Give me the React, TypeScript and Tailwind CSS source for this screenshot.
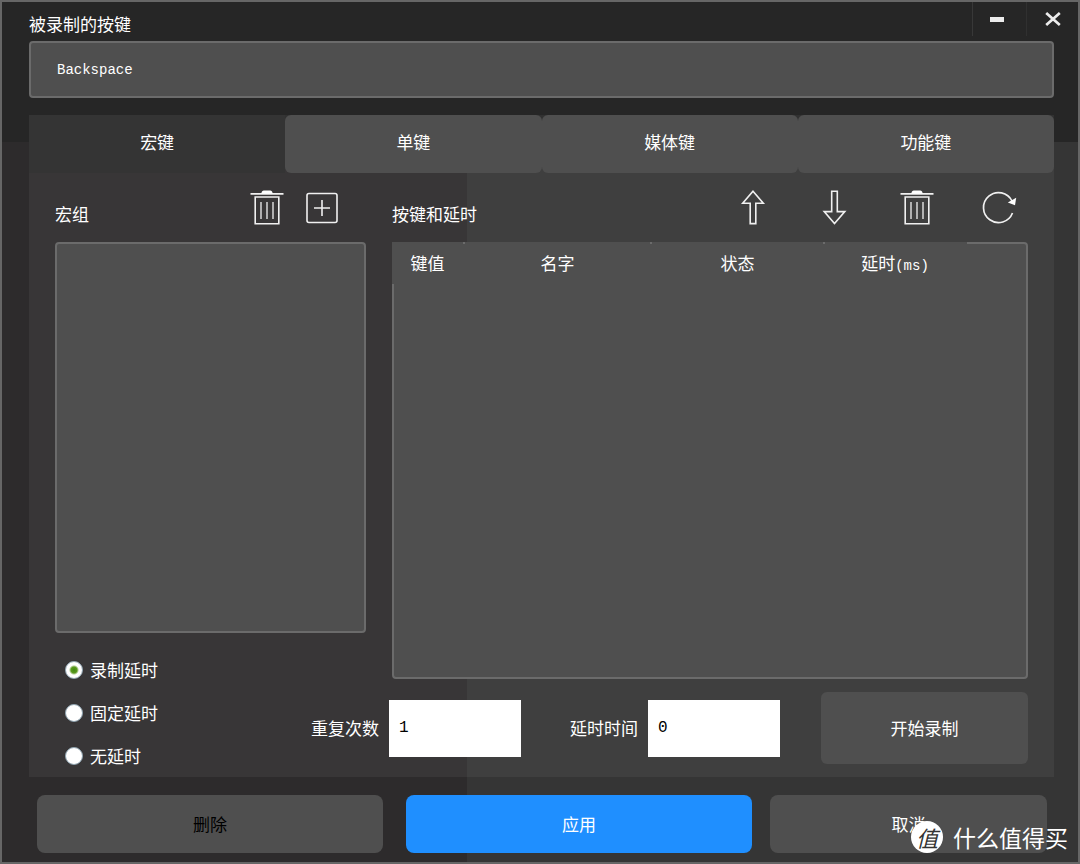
import { useState } from "react";
import type { ReactNode } from "react";

const tabs = ["宏键", "单键", "媒体键", "功能键"];

const delayModes = [
  { id: "record", label: "录制延时" },
  { id: "fixed", label: "固定延时" },
  { id: "none", label: "无延时" },
];

const columns = [
  { name: "键值", width: "w-[73px]" },
  { name: "名字", width: "w-[187px]" },
  { name: "状态", width: "w-[173px]" },
  { name: "延时", unit: "(ms)", width: "w-[142px]" },
];

function Icon({ children }: { children: ReactNode }) {
  return (
    <svg viewBox="0 0 36 36" className="size-9" fill="none" stroke="#f0f0f0" strokeWidth="1.6">
      {children}
    </svg>
  );
}

function TrashIcon() {
  return (
    <Icon>
      <path d="M1.5 3.8h33" strokeWidth="1.7" />
      <path d="M12.3 3.8c.3-2.2 1.2-3.3 2.6-3.3h6.2c1.4 0 2.3 1.1 2.6 3.3z" fill="#fff" stroke="none" />
      <path d="M6.2 7h23.6v26.8H6.2z" />
      <path d="M12 12v17M18 12v17M24 12v17" strokeWidth="1.3" />
    </Icon>
  );
}

function PlusIcon() {
  return (
    <Icon>
      <rect x="3" y="3.5" width="30" height="29" rx="2" />
      <path d="M10 18h16M18 10v16" />
    </Icon>
  );
}

function UpIcon() {
  return (
    <Icon>
      <path d="M18 1.2 28.3 13.2h-7.5v20.4h-5.6V13.2H7.7z" />
    </Icon>
  );
}

function DownIcon() {
  return (
    <Icon>
      <path d="M14.7 1.2h5.6v20.4h7.5L17.5 33.6 7.2 21.6h7.5z" />
    </Icon>
  );
}

function ReloadIcon() {
  return (
    <Icon>
      <path d="M31 11A15 15 0 1 0 31.5 23" strokeWidth="1.7" />
      <path d="M35.2 7.8 34 15.2 26.8 12.4z" fill="#fff" stroke="none" />
    </Icon>
  );
}

function IconButton({ label, children }: { label: string; children: ReactNode }) {
  return (
    <button type="button" aria-label={label} className="size-9 shrink-0">
      {children}
    </button>
  );
}

function NumberField({ id, label, value, onChange }: { id: string; label: string; value: string; onChange: (v: string) => void }) {
  return (
    <div className="flex items-center gap-[10px]">
      <label htmlFor={id} className="whitespace-nowrap">{label}</label>
      <input
        id={id}
        value={value}
        onChange={(e) => onChange(e.target.value)}
        className="h-[57px] w-[132px] bg-white px-[10px] font-['Liberation_Mono',monospace] text-base text-black outline-none"
      />
    </div>
  );
}

export default function App() {
  const [tab, setTab] = useState(0);
  const [mode, setMode] = useState("record");
  const [key, setKey] = useState("Backspace");
  const [repeat, setRepeat] = useState("1");
  const [delay, setDelay] = useState("0");

  return (
    <main className="relative flex min-h-screen flex-col border-2 border-[#666666] bg-[linear-gradient(to_bottom,#262626_140px,transparent_140px),linear-gradient(to_right,#2d2b2c_465px,#353535_465px)] font-['Noto_Sans_CJK_SC',sans-serif] text-[17px] leading-6 text-white">
      <header className="flex h-[39px] items-start justify-between pl-[27px]">
        <label htmlFor="recorded" className="pt-[10px]">被录制的按键</label>
        <div className="flex h-[34px]">
          <button type="button" aria-label="最小化" className="flex w-[54px] items-center justify-center border-l border-[#383838] pr-[6px]">
            <span className="h-[5px] w-[14px] bg-[#ececec]" />
          </button>
          <button type="button" aria-label="关闭" className="flex w-[52px] items-center justify-center border-l border-[#303030]">
            <svg viewBox="0 0 16 14" className="h-[14px] w-4" stroke="#ececec" strokeWidth="2.7">
              <path d="M1.2 1l13.6 12M14.8 1 1.2 13" />
            </svg>
          </button>
        </div>
      </header>

      <div className="flex grow flex-col pr-6 pl-[27px]">
        <input
          id="recorded"
          value={key}
          onChange={(e) => setKey(e.target.value)}
          className="mb-[17px] h-[57px] rounded border-2 border-[#6b6b6b] bg-[#4f4f4f] px-[26px] font-['Liberation_Mono',monospace] text-sm outline-none"
        />

        <section className="flex grow flex-col bg-white/5">
          <div role="tablist" className="grid grid-cols-4">
            {tabs.map((name, i) => (
              <button
                key={name}
                type="button"
                role="tab"
                aria-selected={i === tab}
                onClick={() => setTab(i)}
                className={i === tab ? "h-[58px] bg-[#343434] pb-1" : "h-[58px] rounded-md bg-[#4f4f4f] pb-1"}
              >
                {name}
              </button>
            ))}
          </div>

          <div className="grid grow grid-cols-[256fr_55fr_26px_636fr] grid-rows-[69px_1fr_46px_98px] px-[26px]">
            <div className="col-span-2 flex items-center justify-between pr-[26px]">
              <h2 className="pt-3">宏组</h2>
              <div className="flex gap-[19px]">
                <IconButton label="删除宏"><TrashIcon /></IconButton>
                <IconButton label="新建宏"><PlusIcon /></IconButton>
              </div>
            </div>
            <div className="col-start-4 flex items-center justify-between pr-[11px]">
              <h2 className="pt-3">按键和延时</h2>
              <div className="flex gap-[46px]">
                <IconButton label="上移"><UpIcon /></IconButton>
                <IconButton label="下移"><DownIcon /></IconButton>
                <IconButton label="删除按键"><TrashIcon /></IconButton>
                <IconButton label="重置"><ReloadIcon /></IconButton>
              </div>
            </div>

            <div className="col-span-2 row-start-2 rounded border-2 border-[#6b6b6b] bg-[#4f4f4f]" />

            <div className="col-start-4 row-span-2 row-start-2 rounded border-2 border-[#6b6b6b] bg-[#4f4f4f]">
              {/* the header cells cover the list's own border */}
              <div className="-m-0.5">
                <table className="w-full table-fixed">
                  <thead>
                    <tr className="h-[42px]">
                      {columns.map((c) => (
                        <th
                          key={c.name}
                          scope="col"
                          className={`${c.width} relative bg-[#4f4f4f] p-0 pr-[2px] font-normal after:absolute after:top-0 after:right-0 after:h-0.5 after:w-0.5 after:bg-[#6b6b6b] last-of-type:after:hidden`}
                        >
                          {c.name}
                          {c.unit && <span className="font-['Liberation_Mono',monospace] text-sm">{c.unit}</span>}
                        </th>
                      ))}
                      <td />
                    </tr>
                  </thead>
                </table>
              </div>
            </div>

            <fieldset className="col-start-1 row-span-2 row-start-3 pt-[15px] pl-[10px]">
              {delayModes.map((m) => (
                <label key={m.id} className="flex h-[43px] items-center gap-[7px]">
                  <input
                    type="radio"
                    name="delay-mode"
                    checked={mode === m.id}
                    onChange={() => setMode(m.id)}
                    className="size-[18px] appearance-none rounded-full border border-[#8ea3b0] bg-white checked:bg-[radial-gradient(circle,#3f8a10_0,#5c9a20_3px,#ffffff_5px)]"
                  />
                  {m.label}
                </label>
              ))}
            </fieldset>

            <div className="col-span-3 col-start-2 row-start-4 flex items-center justify-between">
              <div className="flex gap-[49px]">
                <NumberField id="repeat" label="重复次数" value={repeat} onChange={setRepeat} />
                <NumberField id="delay" label="延时时间" value={delay} onChange={setDelay} />
              </div>
              <button type="button" className="h-[72px] w-[207px] rounded-md bg-[#4f4f4f]">开始录制</button>
            </div>
          </div>
        </section>

        <footer className="flex gap-[18px] pt-[18px] pr-[7px] pb-[9px] pl-2">
          <button type="button" className="mr-[5px] h-[58px] flex-5 rounded-lg bg-[#4f4f4f] text-black">删除</button>
          <button type="button" className="h-[58px] flex-5 rounded-lg bg-[#1f8fff]">应用</button>
          <button type="button" className="h-[58px] flex-4 rounded-lg bg-[#4f4f4f]">取消</button>
        </footer>
      </div>

      <div className="absolute right-[10px] bottom-[9px] flex items-center gap-[10px] text-[23px] leading-8">
        <span className="flex size-8 items-center justify-center rounded-full bg-white text-[22px] text-[#333333] italic">值</span>
        <span>什么值得买</span>
      </div>
    </main>
  );
}
